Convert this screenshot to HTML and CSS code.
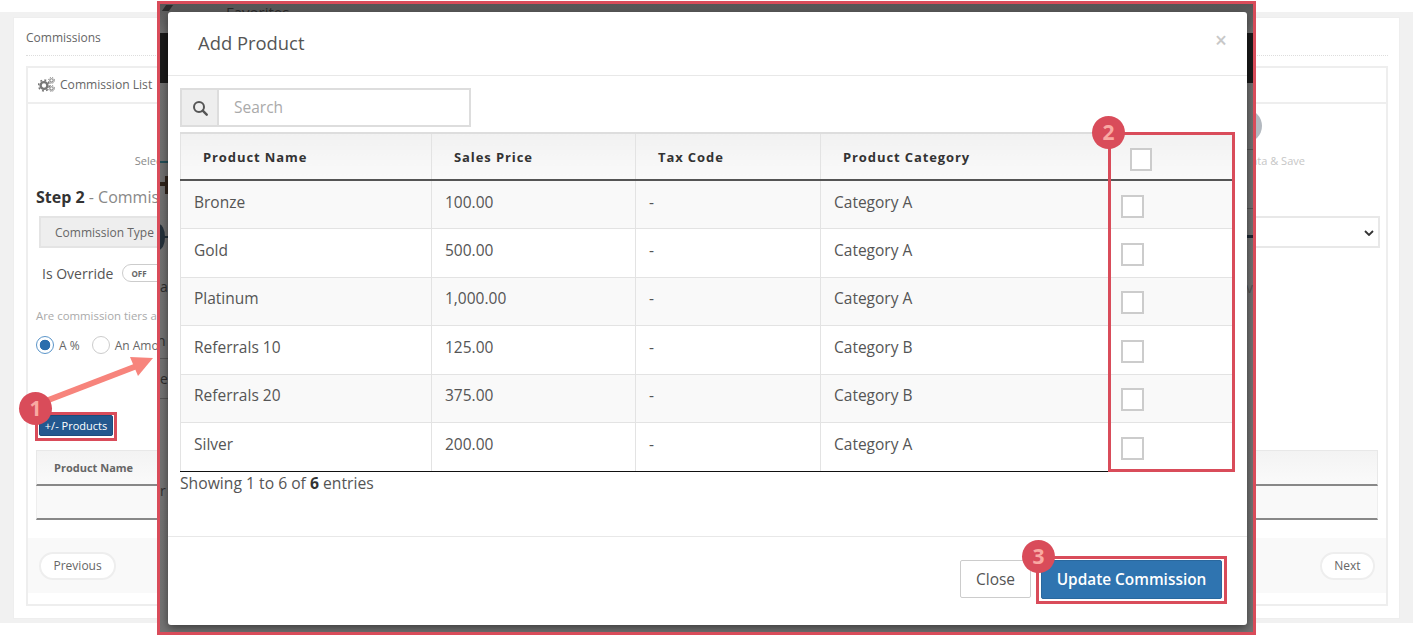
FILE: index.html
```html
<!DOCTYPE html>
<html lang="en">
<head>
<meta charset="utf-8">
<title>Add Product</title>
<link rel="stylesheet" href="styles.css">
</head>
<body>
<div class="stage">
  <div class="page">
    <div class="card">
      <div class="card-title">Commissions</div>
      <div class="portlet">
        <div class="tab">
          <svg class="gears" viewBox="0 0 17 15" width="17" height="15" aria-hidden="true">
            <circle cx="6" cy="8.5" r="3.4" fill="none" stroke="#777" stroke-width="2.4"/>
            <circle cx="6" cy="8.5" r="5.4" fill="none" stroke="#777" stroke-width="1.6" stroke-dasharray="1.9 2.3"/>
            <circle cx="13.5" cy="3.4" r="1.7" fill="none" stroke="#888" stroke-width="1.1"/>
            <circle cx="13.5" cy="3.4" r="3" fill="none" stroke="#888" stroke-width="1" stroke-dasharray="1.2 1.2"/>
            <circle cx="13.5" cy="11.4" r="1.7" fill="none" stroke="#888" stroke-width="1.1"/>
            <circle cx="13.5" cy="11.4" r="3" fill="none" stroke="#888" stroke-width="1" stroke-dasharray="1.2 1.2"/>
          </svg>
          <span>Commission List</span>
        </div>
        <div class="wizard">
          <div class="steps">
            <div class="step"><span class="dot"></span><span class="step-label">Select Commission</span></div>
            <div class="step step-off"><span class="dot"></span><span class="step-label">Commission Data &amp; Save</span></div>
          </div>
          <h3 class="step-title"><b>Step 2</b> - Commission Details</h3>
          <div class="input-group">
            <span class="addon">Commission Type</span>
            <span class="select"><svg class="chev" viewBox="0 0 10 6" width="10" height="6" aria-hidden="true"><path d="M1 1l4 4 4-4" fill="none" stroke="#333" stroke-width="1.8"/></svg></span>
          </div>
          <div class="override">
            <span>Is Override</span>
            <span class="toggle">OFF</span>
          </div>
          <p class="hint">Are commission tiers a % or an amount?</p>
          <div class="radios">
            <span class="radio radio-on"></span><span class="radio-label">A %</span>
            <span class="radio"></span><span class="radio-label">An Amount</span>
          </div>
          <button class="btn-products" type="button">+/- Products</button>
          <div class="mini-table">
            <div class="mini-head">Product Name</div>
            <div class="mini-row"></div>
          </div>
        </div>
        <div class="portlet-foot">
          <button class="pill" type="button">Previous</button>
          <button class="pill" type="button">Next</button>
        </div>
      </div>
    </div>
  </div>

  <div class="frame">
    <span class="mark band-top"></span>
    <span class="mark fav">Favorites</span>
    <span class="mark pin"></span>
    <span class="mark teal"></span>
    <span class="mark cross-h"></span>
    <span class="mark cross-v"></span>
    <span class="mark disc"></span>
    <span class="mark disc-line"></span>
    <span class="mark ch ch-a">a</span>
    <span class="mark ch ch-n">n</span>
    <span class="mark ch ch-e">e</span>
    <span class="mark ch ch-r">r</span>
    <span class="mark ch ch-v">v</span>
    <span class="mark rule rule-1"></span>
    <span class="mark rule rule-2"></span>
    <span class="mark rule rule-3"></span>
    <span class="mark rule rule-4"></span>
    <span class="mark right-bar"></span>

    <div class="modal">
      <div class="modal-head">
        <h4>Add Product</h4>
        <span class="close-x">×</span>
      </div>
      <div class="modal-body">
        <div class="search">
          <span class="search-addon">
            <svg viewBox="0 0 16 16" width="16" height="16" aria-hidden="true"><circle cx="7" cy="7" r="5" fill="none" stroke="#555" stroke-width="2"/><path d="M10.7 10.7l4 4" stroke="#555" stroke-width="2.4" stroke-linecap="round"/></svg>
          </span>
          <span class="search-input">Search</span>
        </div>
        <table class="products">
          <colgroup><col class="c1"><col class="c2"><col class="c3"><col class="c4"><col class="c5"></colgroup>
          <thead>
            <tr><th>Product Name</th><th>Sales Price</th><th>Tax Code</th><th>Product Category</th><th class="th-check"><span class="check"></span></th></tr>
          </thead>
          <tbody>
            <tr><td>Bronze</td><td>100.00</td><td>-</td><td>Category A</td><td><span class="check"></span></td></tr>
            <tr><td>Gold</td><td>500.00</td><td>-</td><td>Category A</td><td><span class="check"></span></td></tr>
            <tr><td>Platinum</td><td>1,000.00</td><td>-</td><td>Category A</td><td><span class="check"></span></td></tr>
            <tr><td>Referrals 10</td><td>125.00</td><td>-</td><td>Category B</td><td><span class="check"></span></td></tr>
            <tr><td>Referrals 20</td><td>375.00</td><td>-</td><td>Category B</td><td><span class="check"></span></td></tr>
            <tr><td>Silver</td><td>200.00</td><td>-</td><td>Category A</td><td><span class="check"></span></td></tr>
          </tbody>
        </table>
        <div class="showing">Showing 1 to 6 of <b>6</b> entries</div>
      </div>
      <div class="modal-foot">
        <button class="btn-close" type="button">Close</button>
        <button class="btn-update" type="button">Update Commission</button>
      </div>
    </div>
  </div>

  <svg class="arrow" viewBox="0 0 130 60" width="130" height="60" aria-hidden="true">
    <path d="M8 52L112 12" stroke="#f7847c" stroke-width="6" fill="none"/>
    <path d="M100 5L123 6 108 24z" fill="#f7847c"/>
  </svg>
  <span class="hl hl-1"></span>
  <span class="hl hl-2"></span>
  <span class="hl hl-3"></span>
  <span class="badge badge-1">1</span>
  <span class="badge badge-2">2</span>
  <span class="badge badge-3">3</span>
</div>
</body>
</html>
```

FILE: styles.css
```css
* { box-sizing: border-box; }
html, body { margin: 0; padding: 0; background: #fff; }
body { font-family: "Open Sans", "Liberation Sans", sans-serif; color: #555; }
.stage { position: relative; width: 1413px; height: 636px; overflow: hidden; }
button { font-family: inherit; cursor: default; }

/* background page */
.page { margin-top: 12px; height: 611px; padding: 5px 13px 4px; background: #f1f1f1; }
.card { width: 1387px; height: 602px; padding: 0 11px 0 12px; background: #fff; border: 1px solid #eee; }
.card-title { height: 38px; padding-top: 12px; font-size: 12px; line-height: 16px; color: #666; border-bottom: 1px dotted #ddd; }
.portlet { display: flex; flex-direction: column; width: 1362px; height: 540px; margin-top: 10px; border: 2px solid #eee; }
.tab { display: flex; align-items: center; gap: 5px; height: 36px; flex: none; padding: 0 0 2px 10px; font-size: 12.1px; color: #666; border-bottom: 2px solid #eee; }
.wizard { flex: 1; padding: 0 8px; }
.steps { display: flex; justify-content: space-between; height: 71px; padding: 5px 74px 0 88px; }
.step { display: flex; flex-direction: column; align-items: center; width: 118px; }
.dot { width: 34px; height: 34px; border-radius: 50%; background: #b3b9c0; flex: none; }
.step-label { margin-top: 10px; font-size: 11px; line-height: 16px; color: #888; white-space: nowrap; }
.step-off .step-label { padding-right: 8px; color: #c6c6c6; }
.step-title { margin: 0; height: 30px; font-size: 16px; line-height: 44px; font-weight: 400; color: #888; white-space: nowrap; }
.step-title b { color: #333; font-weight: 700; }
.input-group { display: flex; height: 32px; margin: 11px -2px 0 3px; }
.addon { display: flex; align-items: center; padding: 0 40px 0 14px; font-size: 12px; color: #666; background: #eee; border: 2px solid #e4e4e4; border-right: 0; white-space: nowrap; }
.select { position: relative; flex: 1; background: #fff; border: 2px solid #e8e8e8; }
.chev { position: absolute; right: 4px; top: 12px; }
.override { display: flex; align-items: center; gap: 9px; height: 18px; margin: 16px 0 0 6px; font-size: 14px; color: #555; }
.toggle { display: flex; align-items: center; width: 60px; height: 18px; padding-left: 8px; font-size: 8px; font-weight: 700; color: #666; background: #fff; border: 1px solid #ccc; border-radius: 9px; }
.hint { margin: 26px 0 0; font-size: 11.4px; line-height: 16px; color: #aaa; white-space: nowrap; }
.radios { display: flex; align-items: center; height: 18px; margin-top: 12px; font-size: 12px; color: #666; }
.radio { width: 18px; height: 18px; border: 1.5px solid #ccc; border-radius: 50%; background: #fff; flex: none; }
.radio-on { border-color: #5b95c9; background: radial-gradient(circle, #2c6fad 0 5px, #fff 5.6px); }
.radio-label { margin-left: 5px; margin-right: 12px; white-space: nowrap; }
.btn-products { display: block; width: 74px; height: 21px; margin: 61px 0 0 3px; padding: 0; font-size: 11px; line-height: 19px; color: #fff; background: #23588f; border: 1px solid #1d4c7c; border-radius: 2px; white-space: nowrap; }
.mini-table { margin-top: 14px; height: 70px; }
.mini-head { height: 36px; padding: 9px 0 0 17px; font-size: 11px; line-height: 16px; font-weight: 700; color: #666; background: linear-gradient(#f3f3f3, #fafafa); border: 1px solid #e8e8e8; border-bottom: 2px solid #888; }
.mini-row { height: 34px; background: #f9f9f9; border-left: 1px solid #eee; border-right: 1px solid #eee; border-bottom: 2px solid #888; }
.portlet-foot { display: flex; justify-content: space-between; align-items: center; height: 55px; flex: none; margin-bottom: 11px; padding: 0 11px; background: #f9f9f9; }
.pill { height: 28px; padding: 0 12.5px; font-size: 12px; color: #666; background: #fff; border: 2px solid #eee; border-radius: 14px; }

/* annotated modal screenshot */
.frame { position: absolute; left: 157px; top: 1px; width: 1099px; height: 634px; overflow: hidden; border: 3px solid #d94c5a; background: linear-gradient(#565656 0, #707070 28px, #747474 100%); }
.mark { position: absolute; }
.band-top { left: 0; right: 0; top: 29px; height: 50px; background: #1b1b1b; }
.fav { left: 66px; top: -2px; font-size: 15px; line-height: 20px; color: #2b2b2b; white-space: nowrap; }
.pin { left: 4px; top: 1px; width: 7px; height: 6px; background: #2c2c2c; transform: skewX(-35deg); }
.teal { left: 0; top: 157px; width: 8px; height: 2px; background: #244e58; }
.cross-h { left: 0; top: 178px; width: 8px; height: 4px; background: #2f241c; }
.cross-v { left: 5px; top: 172px; width: 3px; height: 18px; background: #2f241c; }
.disc { left: -8px; top: 220px; width: 13px; height: 26px; border-radius: 50%; background: #24303a; }
.disc-line { left: 0; top: 232px; width: 8px; height: 2px; background: #24303a; }
.ch { font-size: 14px; line-height: 16px; color: #2e2e2e; }
.ch-a { left: 0; top: 275px; }
.ch-n { left: -3px; top: 329px; }
.ch-e { left: 0; top: 367px; }
.ch-r { left: 0; top: 479px; }
.ch-v { left: 1086px; top: 276px; color: #555; }
.rule { height: 1px; background: #555; }
.rule-1 { left: 0; width: 8px; top: 354px; }
.rule-2 { left: 0; width: 8px; top: 394px; }
.rule-3 { right: 0; width: 6px; top: 145px; }
.rule-4 { right: 0; width: 6px; top: 204px; }
.right-bar { right: 0; width: 6px; top: 231px; height: 3px; background: #1d2833; }

.modal { position: relative; display: flex; flex-direction: column; width: 1079px; height: 613px; margin: 8px 0 0 8px; background: #fff; border-radius: 3px; box-shadow: 0 3px 10px rgba(0,0,0,.5); }
.modal-head { position: relative; height: 64px; flex: none; padding: 18px 30px 0; border-bottom: 1px solid #e8e8e8; }
.modal-head h4 { margin: 0; font-size: 18.4px; line-height: 25px; font-weight: 400; color: #555; }
.close-x { position: absolute; right: 20px; top: 16px; font-size: 21px; line-height: 24px; font-weight: 600; color: #c8c8c8; }
.modal-body { flex: 1; padding: 12px 12px 0; }
.search { display: flex; width: 291px; height: 39px; }
.search-addon { display: flex; align-items: center; justify-content: center; width: 39px; flex: none; background: #eee; border: 2px solid #ddd; }
.search-input { flex: 1; padding-left: 15px; font-size: 15.5px; line-height: 35px; color: #aaa; border: 2px solid #ddd; border-left: 0; }
.products { width: 1053px; margin-top: 5px; table-layout: fixed; border-collapse: collapse; font-size: 15.5px; color: #555; }
.c1 { width: 251px; }
.c2 { width: 204px; }
.c3 { width: 185px; }
.c4 { width: 288px; }
.c5 { width: 125px; }
.products th { height: 47px; padding: 0 0 0 22px; text-align: left; font-size: 13px; font-weight: 700; letter-spacing: .9px; color: #333; background: linear-gradient(#f1f1f1, #fafafa); border-top: 2px solid #ddd; border-left: 1px solid #e3e3e3; border-bottom: 2px solid #555; }
.products td { height: 48.5px; padding: 0 0 6px 13px; border-left: 1px solid #e3e3e3; border-top: 1px solid #e3e3e3; vertical-align: middle; }
.products tbody tr:first-child td { border-top: 0; }
.products tbody tr:nth-child(odd) td { background: #f9f9f9; }
.products tbody tr:last-child td { border-bottom: 1px solid #111; }
.check { display: block; width: 23px; height: 23px; background: #fff; border: 2px solid #ccc; }
.th-check .check { width: 22px; height: 23px; margin-top: 5px; }
.products td:last-child { padding: 3px 0 0 12px; }
.products th.th-check { padding-left: 21px; }
.showing { margin-top: 1px; font-size: 15.7px; line-height: 20px; color: #555; }
.showing b { color: #333; }
.modal-foot { display: flex; justify-content: flex-end; gap: 10px; height: 89px; flex: none; padding: 23px 25px 0 0; border-top: 1px solid #e8e8e8; }
.btn-close { width: 71px; height: 38px; padding: 0; font-size: 15.5px; color: #555; background: #fff; border: 1px solid #ccc; border-radius: 2px; }
.btn-update { width: 181px; height: 39px; padding: 0; font-size: 15.4px; font-weight: 600; color: #fff; background: #2f74b0; border: 1px solid #2a689e; border-radius: 2px; white-space: nowrap; }

/* call-outs */
.arrow { position: absolute; left: 30px; top: 352px; }
.hl { position: absolute; border: 3px solid #d94c5a; }
.hl-1 { left: 35px; top: 412px; width: 82px; height: 29px; }
.hl-2 { left: 1108px; top: 132px; width: 127px; height: 340px; }
.hl-3 { left: 1036px; top: 556px; width: 191px; height: 48px; }
.badge { position: absolute; width: 33px; height: 33px; border-radius: 50%; background: #d94c5a; color: #f9a9a2; font-size: 21px; line-height: 33px; font-weight: 700; text-align: center; }
.badge-1 { left: 19px; top: 392px; }
.badge-2 { left: 1092px; top: 116px; }
.badge-3 { left: 1022px; top: 540px; }
```
